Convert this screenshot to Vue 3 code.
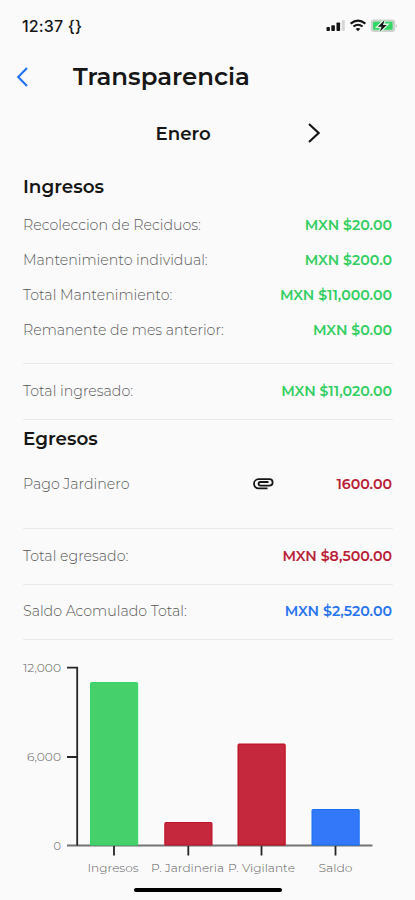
<template>
  <main class="screen">
    <div class="status">
      <span class="status__time">12:37 {}</span>
      <svg class="status__icons" width="72" height="16" viewBox="0 0 72 16" aria-hidden="true">
        <g fill="#161616">
          <rect x="0.5" y="9" width="3.4" height="4" rx="0.8" />
          <rect x="5.3" y="7.2" width="3.6" height="5.8" rx="0.8" />
          <rect x="10.5" y="4.4" width="3.6" height="8.6" rx="0.8" />
        </g>
        <rect x="15.8" y="2" width="3" height="11" rx="0.8" fill="#d6d6d6" />
        <g fill="none" stroke="#161616" stroke-width="2">
          <path d="M24.6 5.6Q32 -0.4 39.4 5.6" />
          <path d="M27.4 8.6Q32 4.8 36.6 8.6" />
        </g>
        <path d="M29.6 10.8Q32 9 34.4 10.8L32 13.3Z" fill="#161616" />
        <rect x="44.8" y="1.6" width="24.4" height="12.4" rx="3.2" fill="#c9d3cb" />
        <rect x="47" y="3.8" width="19.6" height="8" rx="1.2" fill="#32d765" />
        <path d="M69.8 5.8Q72 7.8 69.8 9.8Z" fill="#c0c0c0" />
        <path
          d="M58.6 2L52 8.7H55.6L53.8 13.8L60.7 6.9H57Z"
          fill="#161616"
          stroke="#d9f4df"
          stroke-width="2.6"
          paint-order="stroke"
        />
      </svg>
    </div>

    <header class="header">
      <svg class="header__back" width="12" height="20" viewBox="0 0 12 20" aria-label="Volver">
        <path d="M11 1L2.2 10L11 19" fill="none" stroke="#2471f5" stroke-width="2.1" />
      </svg>
      <h1>Transparencia</h1>
    </header>

    <nav class="month">
      <span class="month__name">{{ month }}</span>
      <svg class="month__next" width="14" height="22" viewBox="0 0 14 22" aria-label="Siguiente">
        <path d="M3 2L12.6 11L3 20" fill="none" stroke="#161616" stroke-width="2.1" />
      </svg>
    </nav>

    <section class="block block--income">
      <h2>Ingresos</h2>
      <div v-for="item in income" :key="item.label" class="row">
        <span class="row__label">{{ item.label }}</span>
        <strong class="row__amount row__amount--green">{{ item.amount }}</strong>
      </div>
    </section>
    <div class="total">
      <span class="row__label">Total ingresado:</span>
      <strong class="row__amount row__amount--green">MXN $11,020.00</strong>
    </div>

    <section class="block block--expenses">
      <h2>Egresos</h2>
      <div class="row row--expense">
        <span class="row__label">Pago Jardinero</span>
        <svg class="row__clip" width="22" height="13" viewBox="0 0 22 13" aria-label="Adjunto">
          <path
            d="M15.5 11.4H6.6A4.5 4.5 0 0 1 6.6 2.2H17.4A3.2 3.2 0 0 1 17.4 8.6H8.4A1.8 1.8 0 0 1 8.4 5H16.5"
            fill="none"
            stroke="#161616"
            stroke-width="1.8"
          />
        </svg>
        <strong class="row__amount row__amount--red">1600.00</strong>
      </div>
    </section>
    <div class="total">
      <span class="row__label">Total egresado:</span>
      <strong class="row__amount row__amount--red">MXN $8,500.00</strong>
    </div>
    <div class="total total--balance">
      <span class="row__label">Saldo Acomulado Total:</span>
      <strong class="row__amount row__amount--blue">MXN $2,520.00</strong>
    </div>

    <svg class="chart" width="415" height="242" viewBox="0 0 415 242" role="img" aria-label="Resumen del mes">
      <g v-for="tick in ticks" :key="tick.label">
        <text
          class="chart__label"
          :x="61 - tick.width"
          :y="tick.y + 4.2"
          :textLength="tick.width"
          lengthAdjust="spacingAndGlyphs"
        >{{ tick.label }}</text>
      </g>
      <path class="chart__base" d="M67 205.5H372.5" />
      <g v-for="bar in bars" :key="bar.label">
        <path :d="barPath(bar)" :fill="bar.fill" :stroke="bar.stroke" />
        <path class="chart__axis" :d="`M${bar.x + 24} 206V215.5`" />
        <text
          class="chart__label"
          :x="bar.textX"
          y="232"
          :textLength="bar.textWidth"
          lengthAdjust="spacingAndGlyphs"
        >{{ bar.label }}</text>
      </g>
      <path class="chart__axis" d="M67 27.7H77.2V205.5M67 117H77" />
    </svg>

    <div class="home"></div>
  </main>
</template>

<script setup>
const month = 'Enero';

const income = [
  { label: 'Recoleccion de Reciduos:', amount: 'MXN $20.00' },
  { label: 'Mantenimiento individual:', amount: 'MXN $200.0' },
  { label: 'Total Mantenimiento:', amount: 'MXN $11,000.00' },
  { label: 'Remanente de mes anterior:', amount: 'MXN $0.00' },
];

const ticks = [
  { label: '12,000', y: 27.7, width: 38 },
  { label: '6,000', y: 117, width: 34 },
  { label: '0', y: 205.5, width: 7.5 },
];

const bars = [
  { label: 'Ingresos', x: 90, top: 42, fill: '#46d06b', stroke: '#32d765', textX: 87.5, textWidth: 51 },
  { label: 'P. Jardineria', x: 164.3, top: 182, fill: '#c5283d', stroke: '#bd1029', textX: 151, textWidth: 73 },
  { label: 'P. Vigilante', x: 237.5, top: 103.5, fill: '#c5283d', stroke: '#bd0a1d', textX: 228, textWidth: 67 },
  { label: 'Saldo', x: 311.5, top: 169, fill: '#3278f8', stroke: '#176ff5', textX: 318.5, textWidth: 34 },
];

function barPath({ x, top }) {
  return `M${x + 0.5} 205V${top + 1.5}Q${x + 0.5} ${top + 0.5} ${x + 1.5} ${top + 0.5}H${x + 46.7}Q${x + 47.7} ${top + 0.5} ${x + 47.7} ${top + 1.5}V205Z`;
}
</script>

<style>
body {
  margin: 0;
  background: #fafafa;
}
</style>

<style scoped>
.screen {
  display: flex;
  flex-direction: column;
  width: 415px;
  height: 900px;
  overflow: hidden;
  background: #fafafa;
  color: #161616;
  font-family: Montserrat, Inter, sans-serif;
}

.status {
  display: flex;
  justify-content: space-between;
  align-items: center;
  height: 51px;
  padding: 0 17px 0 22px;
  box-sizing: border-box;
}

.status__time {
  font: 500 16px Inter, sans-serif;
  letter-spacing: 0.15px;
}

.header {
  display: flex;
  align-items: center;
  height: 51px;
  padding-left: 16px;
}

.header__back {
  margin-right: 45px;
}

h1,
h2 {
  margin: 0;
  font-weight: 600;
}

h1 {
  padding-bottom: 2px;
  font-size: 24.4px;
  line-height: 30px;
}

.month {
  display: grid;
  grid-template-columns: 211px 95px 1fr;
  align-items: center;
  height: 62px;
}

.month__name {
  padding-left: 155.5px;
  font-size: 18.2px;
  font-weight: 600;
}

.month__next {
  grid-column: 3;
}

.block,
.total {
  margin: 0 22px 0 23px;
  border-bottom: 1px solid #eaeaea;
}

.block--income {
  height: 199px;
}

.block--expenses {
  height: 108px;
}

h2 {
  height: 43px;
  font-size: 18.4px;
  line-height: 46px;
}

.block--expenses h2 {
  height: 38px;
  line-height: 38px;
}

.row,
.total {
  display: flex;
  align-items: center;
  justify-content: space-between;
}

.row {
  height: 35px;
}

.row--expense {
  height: 51px;
}

.total {
  height: 53px;
  padding-bottom: 2px;
}

.total--balance {
  height: 51px;
  padding-bottom: 3px;
}

.row__label {
  color: #585858;
  font-size: 14.2px;
  font-weight: 300;
}

.row__amount {
  padding-right: 1px;
  font-size: 14.2px;
  font-weight: 600;
}

.row__amount--green {
  color: #32ce61;
}

.row__amount--red {
  color: #b92036;
}

.row__amount--blue {
  color: #2874ef;
}

.row__clip {
  margin: 0 62px 0 auto;
}

.chart {
  flex: none;
}

.chart__label {
  fill: #606060;
  font-size: 12px;
  font-weight: 300;
}

.chart__axis {
  fill: none;
  stroke: #252525;
  stroke-width: 1.8;
}

.chart__base {
  stroke: #737373;
  stroke-width: 1.8;
}

.home {
  width: 148px;
  height: 4px;
  margin: 6px 0 0 134px;
  border-radius: 2px;
  background: #000;
}
</style>
